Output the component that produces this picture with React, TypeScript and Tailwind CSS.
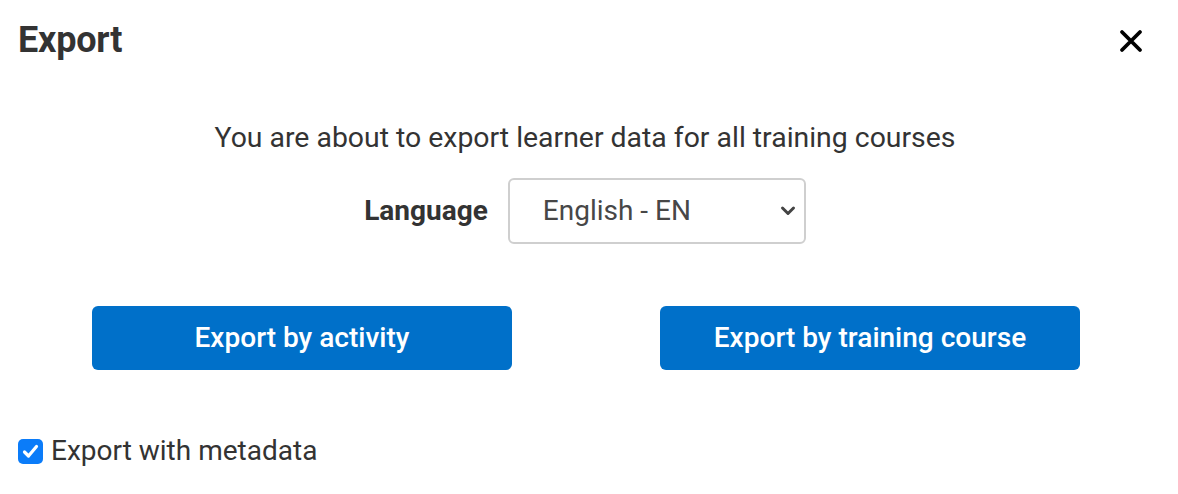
import { useState } from 'react';

const font = { fontFamily: 'Roboto, "Liberation Sans", sans-serif' };
const medium = { fontFamily: '"Roboto Medium", Roboto, "Liberation Sans", sans-serif' };

export default function App() {
  const [lang, setLang] = useState('en');
  const [withMeta, setWithMeta] = useState(true);

  return (
    <div className="w-[1178px] h-[494px] bg-white text-[#333333] relative" style={font}>
      <div className="flex items-start justify-between pl-[18px] pr-[34px] pt-[18px]">
        <h1 className="text-[36px] font-bold leading-[44px] tracking-[-0.2px]">Export</h1>
        <button className="mt-[10px] text-black" aria-label="Close">
          <svg width="26" height="26" viewBox="0 0 26 26">
            <path d="M4 4L22 22M22 4L4 22" stroke="currentColor" strokeWidth="3.8" strokeLinecap="round" />
          </svg>
        </button>
      </div>

      <p className="mt-[60px] text-center text-[28.4px] leading-[32px] pr-[8px]">
        You are about to export learner data for all training courses
      </p>

      <div className="mt-[24px] flex items-center justify-center gap-[20px] pr-[8px]">
        <label className="text-[28px] font-bold">Language</label>
        <div className="relative">
          <select
            value={lang}
            onChange={(e) => setLang(e.target.value)}
            className="appearance-none w-[298px] h-[66px] rounded-[6px] border-2 border-[#cfcfcf] bg-white pl-[33px] text-[28px] text-[#474747]"
            style={font}
          >
            <option value="en">English - EN</option>
            <option value="fr">Français - FR</option>
          </select>
          <svg className="absolute right-[10px] top-[27px] pointer-events-none" width="16" height="12" viewBox="0 0 16 12">
            <path d="M2.5 3L8 8.5L13.5 3" stroke="#444" strokeWidth="3" fill="none" strokeLinecap="round" strokeLinejoin="round" />
          </svg>
        </div>
      </div>

      <div className="mt-[62px] ml-[92px] w-[988px] flex justify-between">
        <button className="w-[420px] h-[64px] rounded-[6px] bg-[#0070c9] text-white text-[28px] font-medium" style={medium}>
          Export by activity
        </button>
        <button className="w-[420px] h-[64px] rounded-[6px] bg-[#0070c9] text-white text-[28px] font-medium" style={medium}>
          Export by training course
        </button>
      </div>

      <label className="mt-[65px] ml-[18px] flex items-center gap-[8px] cursor-pointer select-none">
        <input type="checkbox" className="sr-only" checked={withMeta} onChange={(e) => setWithMeta(e.target.checked)} />
        <span className={`w-[25px] h-[25px] rounded-[5px] flex items-center justify-center ${withMeta ? 'bg-[#0b7cf9]' : 'border-2 border-gray-400'}`}>
          {withMeta && (
            <svg width="19" height="19" viewBox="0 0 19 19">
              <path d="M3.5 10L7.5 14L15.5 4.5" stroke="white" strokeWidth="3.2" fill="none" strokeLinecap="round" strokeLinejoin="round" />
            </svg>
          )}
        </span>
        <span className="text-[28px] leading-[32px]">Export with metadata</span>
      </label>
    </div>
  );
}
